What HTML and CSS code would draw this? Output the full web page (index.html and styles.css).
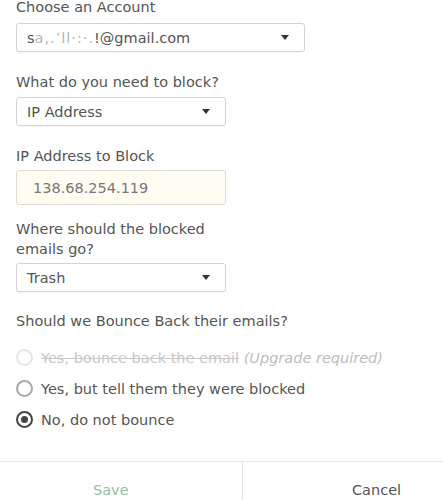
FILE: index.html
```html
<!DOCTYPE html>
<html lang="en">
<head>
<meta charset="utf-8">
<title>Block Sender</title>
<link rel="stylesheet" href="styles.css">
</head>
<body>
<div class="page">
  <div class="form">
    <div class="field field-first">
      <div class="label">Choose an Account</div>
      <div class="select select-wide">
        <span class="value">s<span class="smudge">a,.ʼll·:·.</span>!@gmail.com</span>
        <span class="caret"></span>
      </div>
    </div>

    <div class="field">
      <div class="label label-tight">What do you need to block?</div>
      <div class="select">
        <span class="value">IP Address</span>
        <span class="caret"></span>
      </div>
    </div>

    <div class="field field-input">
      <div class="label label-tighter">IP Address to Block</div>
      <div class="input">138.68.254.119</div>
    </div>

    <div class="field field-dest">
      <div class="label label-tighter">Where should the blocked<br>emails go?</div>
      <div class="select">
        <span class="value">Trash</span>
        <span class="caret"></span>
      </div>
    </div>

    <div class="field field-radios">
      <div class="label label-radios">Should we Bounce Back their emails?</div>
      <div class="radio-row disabled">
        <span class="radio"></span>
        <span class="radio-text"><span class="struck">Yes, bounce back the email</span> <span class="note">(Upgrade required)</span></span>
      </div>
      <div class="radio-row">
        <span class="radio"></span>
        <span class="radio-text">Yes, but tell them they were blocked</span>
      </div>
      <div class="radio-row checked">
        <span class="radio"></span>
        <span class="radio-text">No, do not bounce</span>
      </div>
    </div>
  </div>
</div>
<div class="footer">
  <div class="btn btn-save">Save</div>
  <div class="btn btn-cancel">Cancel</div>
</div>
</body>
</html>
```

FILE: styles.css
```css
html, body {
  margin: 0;
  padding: 0;
  background: #ffffff;
  overflow: hidden;
}

body {
  font-family: "DejaVu Sans", "Liberation Sans", sans-serif;
  font-size: 14.5px;
  color: #555555;
  width: 443px;
  height: 500px;
}

.page {
  padding: 0 16px;
}

.form {
  margin-top: -3px;
}

.field {
  margin-bottom: 20px;
}

.field-input {
  margin-bottom: 14px;
}

.field-dest {
  margin-bottom: 19px;
}

.field-radios {
  margin-bottom: 0;
}

.label {
  line-height: 20px;
  margin-bottom: 6px;
  color: #555555;
}

.label-tight {
  margin-bottom: 5px;
}

.label-tighter {
  margin-bottom: 4px;
}

.label-radios {
  margin-bottom: 11px;
}

.select {
  box-sizing: border-box;
  width: 210px;
  height: 29px;
  border: 1px solid #d4d4d4;
  border-radius: 3px;
  box-shadow: 0 1px 1px rgba(0, 0, 0, 0.04);
  display: flex;
  align-items: center;
  justify-content: space-between;
  padding: 0 15px 0 10px;
  color: #555555;
  background: #ffffff;
}

.select-wide {
  width: 289px;
}

.smudge {
  color: #b5b5b5;
  letter-spacing: 1px;
}

.caret {
  width: 0;
  height: 0;
  border-left: 4px solid transparent;
  border-right: 4px solid transparent;
  border-top: 5px solid #333333;
}

.input {
  box-sizing: border-box;
  width: 210px;
  height: 35px;
  border: 1px solid #dcdcd4;
  border-radius: 3px;
  background: #fffcf2;
  display: flex;
  align-items: center;
  padding-left: 16px;
  color: #777777;
}

.radio-row {
  height: 31px;
  display: flex;
  align-items: center;
  gap: 8px;
  color: #555555;
}

.radio {
  box-sizing: border-box;
  width: 17px;
  height: 17px;
  border-radius: 50%;
  border: 2px solid #a8a8a8;
  flex: none;
  display: flex;
  align-items: center;
  justify-content: center;
}

.disabled .radio {
  border-color: #e6e6e6;
}

.checked .radio {
  border-color: #444444;
}

.checked .radio::after {
  content: "";
  width: 7px;
  height: 7px;
  border-radius: 50%;
  background: #444444;
}

.struck {
  color: #c8c8c8;
  text-decoration: line-through;
}

.note {
  color: #bdbdbd;
  font-style: italic;
}

.footer {
  margin-top: 26px;
  border-top: 1px solid #e8e8e8;
  display: grid;
  grid-template-columns: 243px 1fr;
  height: 60px;
}

.btn {
  padding-top: 18px;
  line-height: 20px;
  font-size: 14.5px;
}

.btn-save {
  border-right: 1px solid #e3e3e3;
  color: #95bf9f;
  padding-left: 93px;
}

.btn-cancel {
  color: #555555;
  padding-left: 109px;
}
```
